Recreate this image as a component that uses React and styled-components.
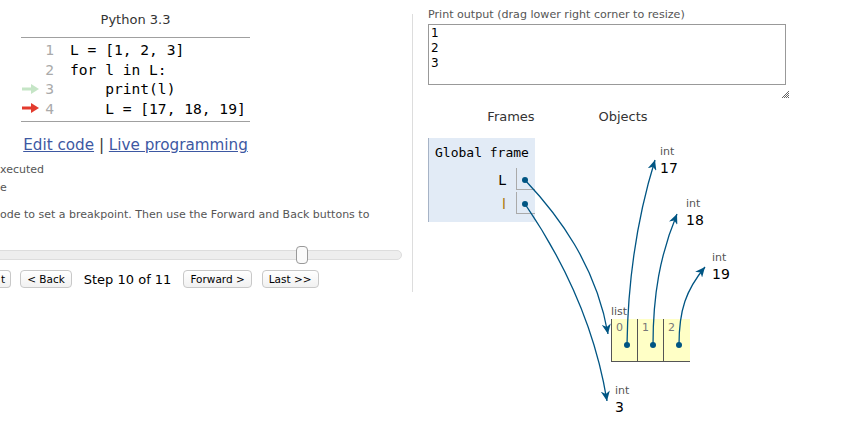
import styled, { createGlobalStyle } from "styled-components";

const GlobalStyle = createGlobalStyle`
  body {
    margin: 0;
    background: #fff;
    font-family: "DejaVu Sans", Verdana, sans-serif;
    overflow: hidden;
  }
`;

const Page = styled.div`
  width: 844px;
  height: 429px;
  display: flex;
  align-items: flex-start;
  overflow: hidden;
`;

const LeftPane = styled.div`
  width: 412px;
  flex: none;
  overflow: hidden;
`;

const Title = styled.div`
  margin: 12px 0 0 21px;
  width: 229px;
  text-align: center;
  font-size: 13px;
  line-height: 16px;
  color: #333;
`;

const CodeTable = styled.div`
  margin: 9px 0 0 21px;
  width: 229px;
  border-top: 1px solid #a0a0a0;
  border-bottom: 1px solid #a0a0a0;
  padding: 2px 0 3px;
`;

const CodeRow = styled.div`
  display: flex;
  align-items: center;
  height: 19.5px;
  font-family: "DejaVu Sans Mono", monospace;
  font-size: 14.6px;
`;

const ArrowCell = styled.div`
  width: 22px;
  display: flex;
  align-items: center;
  padding-left: 1px;
  box-sizing: border-box;
`;

const LineNo = styled.span`
  width: 11px;
  text-align: right;
  color: #aaa;
`;

const Code = styled.span`
  margin-left: 16px;
  white-space: pre;
  color: #000;
`;

const EditLinks = styled.div`
  margin: 13px 0 0 21px;
  width: 229px;
  text-align: center;
  white-space: nowrap;
  font-size: 15.2px;
  line-height: 20px;
  color: #333;
`;

const Link = styled.a`
  color: #3d58a2;
  text-decoration: underline;
`;

const Legend = styled.div`
  margin-top: ${(p) => p.$top}px;
  font-size: 11px;
  line-height: 16px;
  color: #555;
  white-space: nowrap;
`;

const SliderTrack = styled.div`
  position: relative;
  margin: 27px 0 0 -10px;
  width: 412px;
  height: 10px;
  box-sizing: border-box;
  background: #eee;
  border: 1px solid #ddd;
  border-radius: 5px;
`;

const SliderHandle = styled.div`
  position: absolute;
  left: 305px;
  top: -5px;
  width: 12px;
  height: 18px;
  box-sizing: border-box;
  background: #fafafa;
  border: 1px solid #999;
  border-radius: 4px;
`;

const NavRow = styled.div`
  display: flex;
  align-items: center;
  margin-top: 10px;
  height: 18px;
`;

const NavButton = styled.button`
  height: 18px;
  margin: 0 0 0 ${(p) => p.$gap}px;
  padding: 0 ${(p) => (p.$clipped ? 5 : 6)}px 0 ${(p) => (p.$clipped ? 1 : 6)}px;
  font-family: "DejaVu Sans", Verdana, sans-serif;
  font-size: 10.5px;
  line-height: 16px;
  color: #000;
  background: linear-gradient(#fff, #f1f1f1);
  border: 1px solid #c8c8c8;
  border-left: ${(p) => (p.$clipped ? "none" : "1px solid #c8c8c8")};
  border-radius: ${(p) => (p.$clipped ? "0 4px 4px 0" : "4px")};
`;

const StepText = styled.span`
  margin: 0 12px 0 12px;
  font-size: 13px;
  color: #000;
`;

const Divider = styled.div`
  width: 1px;
  height: 278px;
  margin-top: 14px;
  background: #ddd;
  flex: none;
`;

const RightPane = styled.div`
  margin-left: 15px;
  width: 416px;
  flex: none;
`;

const PrintLabel = styled.div`
  padding-top: 8px;
  font-size: 11.1px;
  line-height: 14px;
  color: #555;
`;

const OutputBox = styled.div`
  margin-top: 2px;
  width: 358px;
  height: 61px;
  box-sizing: border-box;
  border: 1px solid #999;
  padding: 1px 2px;
  font-size: 12px;
  line-height: 15px;
  color: #000;
`;

const GripRow = styled.div`
  width: 361px;
  margin-top: 5px;
  display: flex;
  justify-content: flex-end;
  height: 8px;
`;

const Canvas = styled.div`
  position: relative;
  margin-top: 7px;
  width: 416px;
  height: 324px;
`;

const Headings = styled.div`
  display: grid;
  grid-template-columns: 166px 58px;
  height: 23px;
  line-height: 23px;
  font-size: 13px;
  color: #333;
  text-align: center;
`;

const Frame = styled.div`
  margin-top: 10px;
  width: 107px;
  height: 84px;
  box-sizing: border-box;
  background: #e2ebf6;
  border-left: 1px solid #a6b3c6;
  padding-top: 6px;
`;

const FrameTitle = styled.div`
  padding-left: 6px;
  font-family: "DejaVu Sans Mono", monospace;
  font-size: 13px;
  line-height: 18px;
  color: #000;
`;

const VarRow = styled.div`
  display: flex;
  margin-top: ${(p) => p.$top}px;
  height: 22px;
`;

const VarName = styled.div`
  width: 87px;
  box-sizing: border-box;
  padding-right: 10px;
  text-align: right;
  font-size: 14px;
  line-height: 24px;
  color: ${(p) => p.$color || "#000"};
`;

const VarValue = styled.div`
  width: 19px;
  border-left: 1px solid #aaa;
  border-bottom: 1px solid #aaa;
  box-sizing: border-box;
`;

const HeapObj = styled.div`
  position: absolute;
  left: ${(p) => p.$x}px;
  top: ${(p) => p.$y}px;
`;

const TypeLabel = styled.div`
  font-size: 11px;
  line-height: 14px;
  color: #555;
`;

const IntValue = styled.div`
  font-size: 14px;
  line-height: 18px;
  color: #000;
`;

const ListBox = styled.div`
  display: flex;
  height: 42px;
  background: #ffffc6;
  border-left: 1px solid #555;
  border-bottom: 1px solid #555;
`;

const ListCell = styled.div`
  width: 26px;
  border-right: ${(p) => (p.$last ? "none" : "1px solid #555")};
  padding: 2px 0 0 4px;
  box-sizing: border-box;
  font-size: 11px;
  line-height: 14px;
  color: #777;
`;

const Wires = styled.svg`
  position: absolute;
  left: 0;
  top: 0;
  pointer-events: none;
`;

function StepArrow({ color }) {
  return (
    <svg width="17" height="10" viewBox="0 0 17 10">
      <rect x="0" y="3.5" width="10" height="3" fill={color} />
      <path d="M9 0 L17 5 L9 10 Z" fill={color} />
    </svg>
  );
}

function Grip() {
  return (
    <svg width="8" height="8" viewBox="0 0 8 8">
      <path d="M1 8 L8 1 M3 8 L8 3 M5 8 L8 5 M7 8 L8 7" stroke="#555" strokeWidth="0.9" />
    </svg>
  );
}

const code = [
  { n: 1, text: "L = [1, 2, 3]" },
  { n: 2, text: "for l in L:" },
  { n: 3, text: "    print(l)", arrow: "#c5e5c6" },
  { n: 4, text: "    L = [17, 18, 19]", arrow: "#e33b2e" },
];

const ints = [
  { x: 232, y: 40, v: 17 },
  { x: 258, y: 92, v: 18 },
  { x: 284, y: 146, v: 19 },
  { x: 187, y: 279, v: 3 },
];

const wires = [
  "M97,75 C130,110 168,160 180,229",
  "M97,99 C125,140 165,210 179,296",
  "M199,240 C200,170 210,110 227,55",
  "M225,240 C225,190 232,150 249,109",
  "M251,240 C251,205 258,185 277,162",
];

const dots = [
  [97, 75],
  [97, 99],
  [199, 240],
  [225, 240],
  [251, 240],
];

export default function App() {
  return (
    <Page>
      <GlobalStyle />
      <LeftPane>
        <Title>Python 3.3</Title>
        <CodeTable>
          {code.map((line) => (
            <CodeRow key={line.n}>
              <ArrowCell>{line.arrow && <StepArrow color={line.arrow} />}</ArrowCell>
              <LineNo>{line.n}</LineNo>
              <Code>{line.text}</Code>
            </CodeRow>
          ))}
        </CodeTable>
        <EditLinks>
          <Link>Edit code</Link> | <Link>Live programming</Link>
        </EditLinks>
        <Legend $top={7}>xecuted</Legend>
        <Legend $top={2}>e</Legend>
        <Legend $top={11}>
          ode to set a breakpoint. Then use the Forward and Back buttons to
        </Legend>
        <SliderTrack>
          <SliderHandle />
        </SliderTrack>
        <NavRow>
          <NavButton $clipped $gap={0}>t</NavButton>
          <NavButton $gap={9}>&lt; Back</NavButton>
          <StepText>Step 10 of 11</StepText>
          <NavButton $gap={0}>Forward &gt;</NavButton>
          <NavButton $gap={10}>Last &gt;&gt;</NavButton>
        </NavRow>
      </LeftPane>
      <Divider />
      <RightPane>
        <PrintLabel>Print output (drag lower right corner to resize)</PrintLabel>
        <OutputBox>
          1<br />2<br />3
        </OutputBox>
        <GripRow>
          <Grip />
        </GripRow>
        <Canvas>
          <Headings>
            <span>Frames</span>
            <span>Objects</span>
          </Headings>
          <Frame>
            <FrameTitle>Global frame</FrameTitle>
            <VarRow $top={6}>
              <VarName>L</VarName>
              <VarValue />
            </VarRow>
            <VarRow $top={2}>
              <VarName $color="#a87300">l</VarName>
              <VarValue />
            </VarRow>
          </Frame>
          {ints.map((o) => (
            <HeapObj key={o.v} $x={o.x} $y={o.y}>
              <TypeLabel>int</TypeLabel>
              <IntValue>{o.v}</IntValue>
            </HeapObj>
          ))}
          <HeapObj $x={183} $y={200}>
            <TypeLabel>list</TypeLabel>
            <ListBox>
              <ListCell>0</ListCell>
              <ListCell>1</ListCell>
              <ListCell $last>2</ListCell>
            </ListBox>
          </HeapObj>
          <Wires width="416" height="324">
            <defs>
              <marker
                id="head"
                markerWidth="11"
                markerHeight="9"
                refX="10"
                refY="4.5"
                orient="auto"
                markerUnits="userSpaceOnUse"
              >
                <path d="M0,0 L10,4.5 L0,9 L3,4.5 Z" fill="#005583" />
              </marker>
            </defs>
            {wires.map((d) => (
              <path key={d} d={d} fill="none" stroke="#005583" strokeWidth="1.3" markerEnd="url(#head)" />
            ))}
            {dots.map(([x, y]) => (
              <circle key={`${x}-${y}`} cx={x} cy={y} r="3" fill="#005583" />
            ))}
          </Wires>
        </Canvas>
      </RightPane>
    </Page>
  );
}
